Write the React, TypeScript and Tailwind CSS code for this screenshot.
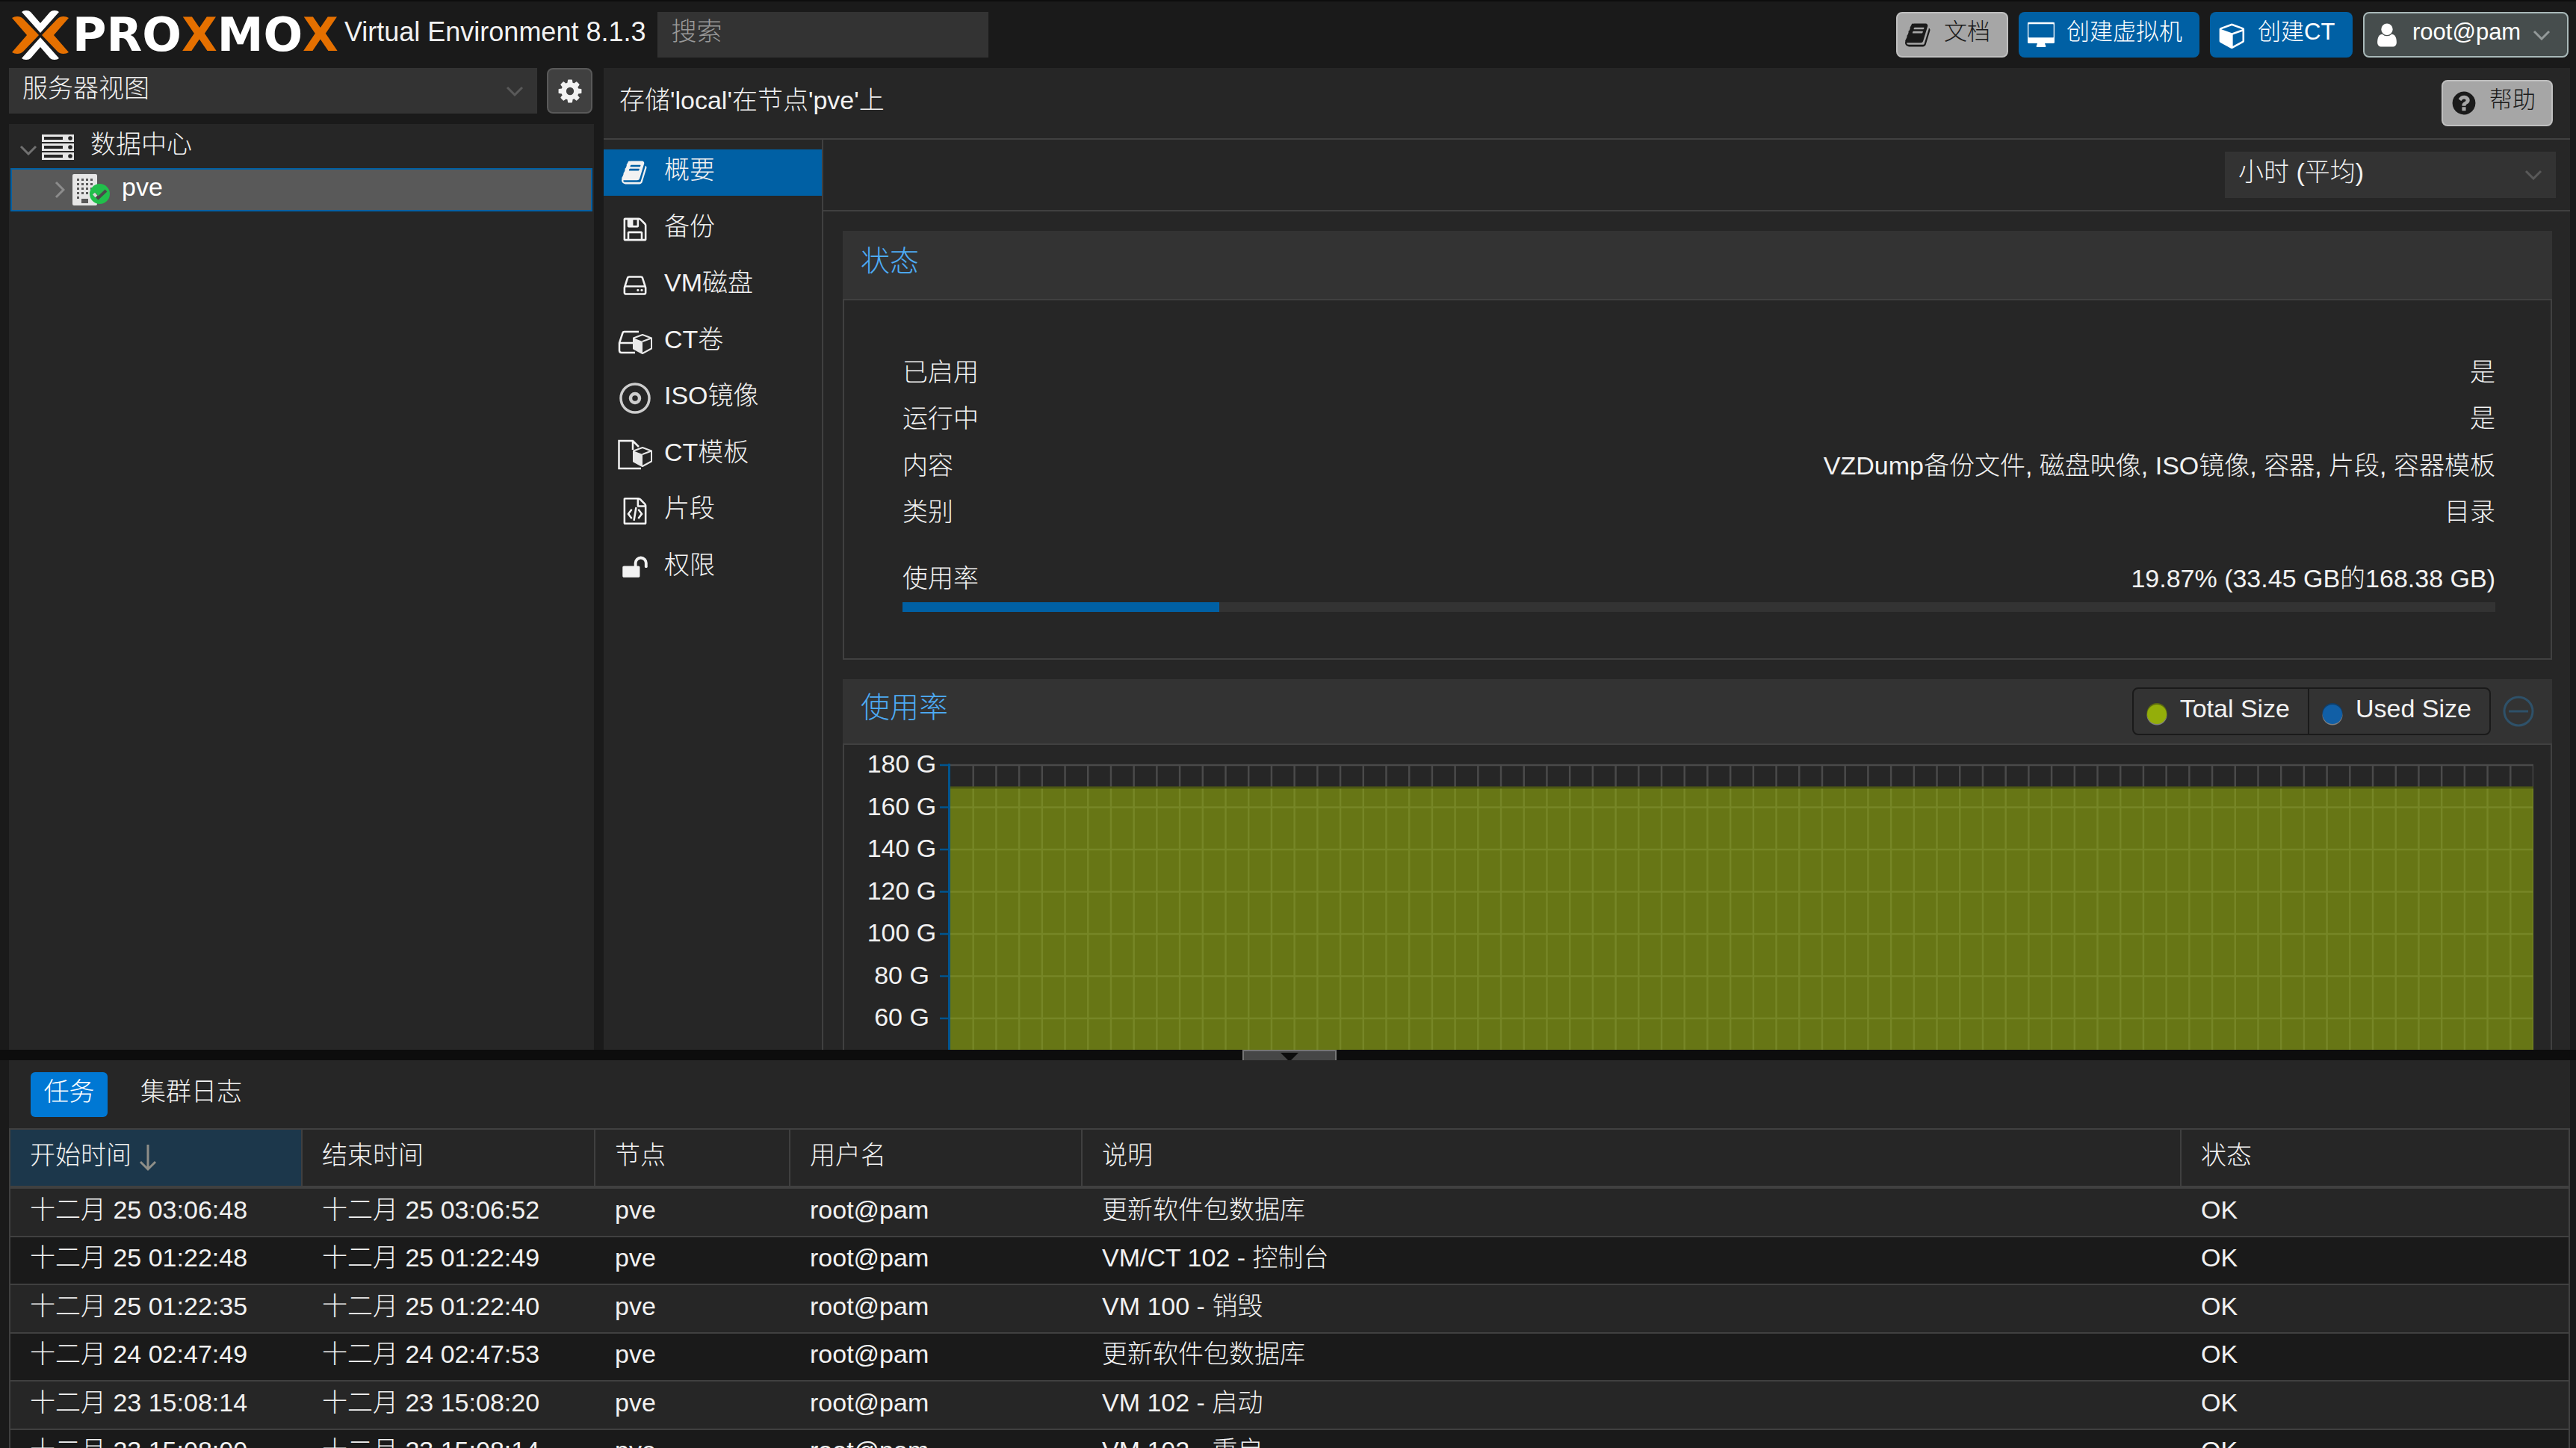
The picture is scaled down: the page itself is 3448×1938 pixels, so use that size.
import React, {useState} from 'react';

const ICONS = {
  book: 'M1639 478q40 57 18 129l-275 906q-19 64-76.5 107.5t-122.5 43.5h-923q-77 0-148.5-53.5t-99.5-131.5q-24-67-2-127 0-4 3-27t4-37q1-8-3-21.5t-3-19.5q2-11 8-21t16.5-23.5 16.5-23.5q23-38 45-91.5t30-91.5q3-10 .5-30t-.5-28q3-11 17-28t17-23q21-36 42-92t25-90q1-9-2.5-32t.5-28q4-13 22-30.5t22-22.5q19-26 42.5-84.5t27.5-96.5q1-8-3-25.5t-2-26.5q2-8 9-18t18-23 17-21q8-12 16.5-30.5t15-35 16-36 19.5-32 26.5-23.5 36-11.5 47.5 5.5l-1 3q38-9 51-9h761q74 0 114 56t18 130l-274 906q-36 119-71.5 153.5t-128.5 34.5h-869q-27 0-38 15-11 16-1 43 24 70 144 70h923q29 0 56-15.5t35-41.5l300-987q7-22 5-57 38 15 59 43zm-1064 2q-4 13 2 22.5t20 9.5h608q13 0 25.5-9.5t16.5-22.5l21-64q4-13-2-22.5t-20-9.5h-608q-13 0-25.5 9.5t-16.5 22.5zm-83 256q-4 13 2 22.5t20 9.5h608q13 0 25.5-9.5t16.5-22.5l21-64q4-13-2-22.5t-20-9.5h-608q-13 0-25.5 9.5t-16.5 22.5z',
  floppy: 'M512 1536h768v-384h-768v384zm896 0h128v-896q0-14-10-38.5t-20-34.5l-281-281q-10-10-34-20t-39-10v416q0 40-28 68t-68 28h-576q-40 0-68-28t-28-68v-416h-128v1280h128v-416q0-40 28-68t68-28h832q40 0 68 28t28 68v416zm-384-928v-320q0-13-9.5-22.5t-22.5-9.5h-192q-13 0-22.5 9.5t-9.5 22.5v320q0 13 9.5 22.5t22.5 9.5h192q13 0 22.5-9.5t9.5-22.5zm640 32v928q0 40-28 68t-68 28h-1344q-40 0-68-28t-28-68v-1344q0-40 28-68t68-28h928q40 0 88 20t76 48l280 280q28 28 48 76t20 88z',
  hdd: 'M1168 1216q0 33-23.5 56.5t-56.5 23.5-56.5-23.5-23.5-56.5 23.5-56.5 56.5-23.5 56.5 23.5 23.5 56.5zm256 0q0 33-23.5 56.5t-56.5 23.5-56.5-23.5-23.5-56.5 23.5-56.5 56.5-23.5 56.5 23.5 23.5 56.5zm112 160v-320q0-13-9.5-22.5t-22.5-9.5h-1216q-13 0-22.5 9.5t-9.5 22.5v320q0 13 9.5 22.5t22.5 9.5h1216q13 0 22.5-9.5t9.5-22.5zm-1230-480h1180l-157-482q-4-13-16-21.5t-26-8.5h-782q-14 0-26 8.5t-16 21.5zm1358 160v320q0 66-47 113t-113 47h-1216q-66 0-113-47t-47-113v-320q0-25 16-75l197-606q17-53 63-86t101-33h782q55 0 101 33t63 86l197 606q16 50 16 75z',
  code: 'M1596 380q28 28 48 76t20 88v1152q0 40-28 68t-68 28h-1344q-40 0-68-28t-28-68v-1600q0-40 28-68t68-28h896q40 0 88 20t76 48zm-444-244v376h376q-10-29-22-41l-313-313q-12-12-41-22zm384 1528v-1024h-416q-40 0-68-28t-28-68v-416h-768v1536h1280zm-928-896q8-11 21-12.5t24 6.5l51 38q11 8 12.5 21t-6.5 24l-182 243 182 243q8 11 6.5 24t-12.5 21l-51 38q-11 8-24 6.5t-21-12.5l-226-301q-14-19 0-38zm802 301q14 19 0 38l-226 301q-8 11-21 12.5t-24-6.5l-51-38q-11-8-12.5-21t6.5-24l182-243-182-243q-8-11-6.5-24t12.5-21l51-38q11-8 24-6.5t21 12.5zm-620 461q-13-2-20.5-13t-5.5-24l138-831q2-13 13-20.5t24-5.5l63 10q13 2 20.5 13t5.5 24l-138 831q-2 13-13 20.5t-24 5.5z',
  unlock: 'M1728 576v256q0 26-19 45t-45 19h-64q-26 0-45-19t-19-45v-256q0-106-75-181t-181-75-181 75-75 181v192h96q40 0 68 28t28 68v576q0 40-28 68t-68 28h-960q-40 0-68-28t-28-68v-576q0-40 28-68t68-28h672v-192q0-185 131.5-316.5t316.5-131.5 316.5 131.5 131.5 316.5z',
  cog: 'M1152 896q0-106-75-181t-181-75-181 75-75 181 75 181 181 75 181-75 75-181zm512-109v222q0 12-8 23t-20 13l-185 28q-19 54-39 91 35 50 107 138 10 12 10 25t-9 23q-27 37-99 108t-94 71q-12 0-26-9l-138-108q-44 23-91 38-16 136-29 186-7 28-36 28h-222q-14 0-24.5-8.5t-11.5-21.5l-28-184q-49-16-90-37l-141 107q-10 9-25 9-14 0-25-11-126-114-165-168-7-10-7-23 0-12 8-23 15-21 51-66.5t54-70.5q-27-50-41-99l-183-27q-13-2-21-12.5t-8-23.5v-222q0-12 8-23t19-13l186-28q14-46 39-92-40-57-107-138-10-12-10-24 0-10 9-23 26-36 98.5-107.5t94.5-71.5q13 0 26 10l138 107q44-23 91-38 16-136 29-186 7-28 36-28h222q14 0 24.5 8.5t11.5 21.5l28 184q49 16 90 37l142-107q9-9 24-9 13 0 25 10 129 119 165 170 7 8 7 22 0 12-8 23-15 21-51 66.5t-54 70.5q26 50 41 98l183 28q13 2 21 12.5t8 23.5z',
  user: 'M1536 1399q0 109-62.5 187t-150.5 78h-854q-88 0-150.5-78t-62.5-187q0-85 8.5-160.5t31.5-152 58.5-131 94-89 134.5-34.5q131 128 313 128t313-128q76 0 134.5 34.5t94 89 58.5 131 31.5 152 8.5 160.5zm-256-887q0 159-112.5 271.5t-271.5 112.5-271.5-112.5-112.5-271.5 112.5-271.5 271.5-112.5 271.5 112.5 112.5 271.5z',
  question: 'M1024 1376v-192q0-14-9-23t-23-9h-192q-14 0-23 9t-9 23v192q0 14 9 23t23 9h192q14 0 23-9t9-23zm256-672q0-88-55.5-163t-138.5-116-170-41q-243 0-371 213-15 24 8 42l132 100q7 6 19 6 16 0 25-12 53-68 86-92 34-24 86-24 48 0 85.5 26t37.5 59q0 38-20 61t-68 45q-63 28-115.5 86.5t-52.5 125.5v36q0 14 9 23t23 9h192q14 0 23-9t9-23q0-19 21.5-49.5t54.5-49.5q32-18 49-28.5t46-35 44.5-48 28-60.5 12.5-81zm384 192q0 209-103 385.5t-279.5 279.5-385.5 103-385.5-103-279.5-279.5-103-385.5 103-385.5 279.5-279.5 385.5-103 385.5 103 279.5 279.5 103 385.5z',
  cube: 'M896 1629l640-349v-636l-640 233v752zm-64-865l698-254-698-254-698 254 698 254zm832-252v768q0 35-18 65t-49 47l-704 384q-28 16-61 16t-61-16l-704-384q-31-17-49-47t-18-65v-768q0-40 23-73t61-47l704-256q22-8 44-8t44 8l704 256q38 14 61 47t23 73z',
  desktop: 'M1728 992v-832q0-13-9.5-22.5t-22.5-9.5h-1600q-13 0-22.5 9.5t-9.5 22.5v832q0 13 9.5 22.5t22.5 9.5h1600q13 0 22.5-9.5t9.5-22.5zm128-832v1088q0 66-47 113t-113 47h-544q0 37 16 77.5t32 71 16 43.5q0 26-19 45t-45 19h-512q-26 0-45-19t-19-45q0-14 16-44t32-70 16-78h-544q-66 0-113-47t-47-113v-1088q0-66 47-113t113-47h1600q66 0 113 47t47 113z',
};

type IconName = keyof typeof ICONS;

const Icon: React.FC<{name: IconName; box?: string}> = ({name, box = '0 0 1792 1792'}) => (
  <svg viewBox={box} className="w-9 h-9 shrink-0 fill-current" aria-hidden="true">
    <path d={ICONS[name]} />
  </svg>
);

const Chevron: React.FC<{className: string}> = ({className}) => (
  <svg viewBox="0 0 24 14" className={className} fill="none" stroke="currentColor" strokeWidth="3" aria-hidden="true">
    <path d="M2 2l10 10L22 2" />
  </svg>
);

const SmallCube = () => (
  <>
    <path d="M33 12l13 5v15l-13 7-13-7V17z" fill="#262626" />
    <path d="M33 13l12 4.500v14L33 38l-12-6.500v-14z" fill="none" stroke="#e8e8e8" strokeWidth="2" strokeLinejoin="round" />
    <path d="M21 17.500l12 4.500v16l-12-6.500z" fill="#e8e8e8" />
    <path d="M33 22l12-4.500" stroke="#e8e8e8" strokeWidth="2" />
  </>
);

const CtVolumeIcon = () => (
  <svg viewBox="0 0 46 46" className="w-[46px] h-[46px]" aria-hidden="true">
    <path d="M28 9H8.500Q7 9 6.500 10.500L2 24v10q0 3 3 3h18M2 24h20" fill="none" stroke="#f2f2f2" strokeWidth="2.500" />
    <SmallCube />
  </svg>
);

const CtTemplateIcon = () => (
  <svg viewBox="0 0 46 46" className="w-[46px] h-[46px]" aria-hidden="true">
    <path d="M31 41H1.500V4H20l8 8M20 4v12" fill="none" stroke="#f2f2f2" strokeWidth="2.500" />
    <SmallCube />
  </svg>
);

const DiscIcon = () => (
  <svg viewBox="0 0 42 42" className="w-[42px] h-[42px]" fill="none" stroke="#cdcdcd" strokeWidth="3.500" aria-hidden="true">
    <circle cx="21" cy="21" r="19" />
    <circle cx="21" cy="21" r="6" strokeWidth="4.500" />
  </svg>
);

const ServerIcon = () => (
  <svg viewBox="0 0 43 34" className="w-[43px] h-[34px]" aria-hidden="true">
    {[0, 12, 24].map((y) => (
      <g key={y}>
        <rect y={y} width="43" height="10" fill="#e6e6e6" />
        <rect x="3" y={y + 3} width="25" height="4" fill="#262626" />
        <circle cx="38" cy={y + 5} r="2.800" fill="#262626" />
      </g>
    ))}
  </svg>
);

const NodeIcon = () => (
  <svg viewBox="0 0 52 42" className="w-[52px] h-[42px]" aria-hidden="true">
    <rect width="33" height="42" rx="2" fill="#e6e6e6" />
    {[6, 12, 18, 24, 30].map((y) =>
      [6, 12, 18, 24].map((x) =>
        y === 30 && x > 6 ? null : <rect key={`${x}-${y}`} x={x} y={y} width="3" height="3" fill="#595959" />,
      ),
    )}
    <rect x="12" y="33" width="9" height="6" fill="#595959" />
    <circle cx="36.500" cy="26.500" r="13.500" fill="#21bf4b" />
    <path d="M29 26l5.500 6L45 22" fill="none" stroke="#4a4a4a" strokeWidth="4" />
    <path d="M28.500 26l3.500 4" fill="none" stroke="#d9d9d9" strokeWidth="4" />
  </svg>
);

const LogoMark = () => (
  <svg viewBox="0 0 76 66" className="w-[76px] h-[66px]" aria-hidden="true">
    <path d="M13 2q2-2 6-2 4 0 6 2l13 15L51 2q2-2 6-2 4 0 6 2L38 30z" fill="#fff" />
    <path d="M13 64q2 2 6 2 4 0 6-2l13-15 13 15q2 2 6 2 4 0 6-2L38 36z" fill="#fff" />
    <path d="M0 10q3-2 7-2 5 0 8 3l21 22-21 22q-3 3-8 3-4 0-7-2l20-23z" fill="#e57000" />
    <path d="M76 10q-3-2-7-2-5 0-8 3L40 33l21 22q3 3 8 3 4 0 7-2L56 33z" fill="#e57000" />
  </svg>
);

const NAV: Array<{id: string; label: string; icon: React.ReactNode}> = [
  {id: 'summary', label: '概要', icon: <Icon name="book" />},
  {id: 'backup', label: '备份', icon: <Icon name="floppy" />},
  {id: 'images', label: 'VM磁盘', icon: <Icon name="hdd" />},
  {id: 'rootdir', label: 'CT卷', icon: <CtVolumeIcon />},
  {id: 'iso', label: 'ISO镜像', icon: <DiscIcon />},
  {id: 'vztmpl', label: 'CT模板', icon: <CtTemplateIcon />},
  {id: 'snippets', label: '片段', icon: <Icon name="code" />},
  {id: 'permissions', label: '权限', icon: <Icon name="unlock" />},
];

const STATUS = [
  ['已启用', '是'],
  ['运行中', '是'],
  ['内容', 'VZDump备份文件, 磁盘映像, ISO镜像, 容器, 片段, 容器模板'],
  ['类别', '目录'],
];

const TASKS = [
  {start: '十二月 25 03:06:48', end: '十二月 25 03:06:52', desc: '更新软件包数据库'},
  {start: '十二月 25 01:22:48', end: '十二月 25 01:22:49', desc: 'VM/CT 102 - 控制台'},
  {start: '十二月 25 01:22:35', end: '十二月 25 01:22:40', desc: 'VM 100 - 销毁'},
  {start: '十二月 24 02:47:49', end: '十二月 24 02:47:53', desc: '更新软件包数据库'},
  {start: '十二月 23 15:08:14', end: '十二月 23 15:08:20', desc: 'VM 102 - 启动'},
  {start: '十二月 23 15:08:00', end: '十二月 23 15:08:14', desc: 'VM 102 - 重启'},
];

const Header = () => (
  <header className="flex items-center h-[91px] shrink-0 border-t-2 border-[#0d0d0d] pl-4 pr-[10px]">
    <LogoMark />
    <div className="flex items-center h-[62px] ml-[5px] font-['DejaVu_Sans'] font-bold text-[62px] leading-[62px] text-white" aria-label="Proxmox">
      PRO<span className="text-[#e57000]">X</span>MO<span className="text-[#e57000]">X</span>
    </div>
    <span className="ml-2 pb-2 text-[36px] leading-10 whitespace-nowrap">Virtual Environment 8.1.3</span>
    <input
      type="text"
      aria-label="搜索"
      placeholder="搜索"
      className="ml-4 w-[443px] h-[61px] bg-[#333] pl-[18px] pb-2 font-light outline-none placeholder:text-[#999]"
    />
    <div className="flex gap-[14px] ml-auto text-[31px] leading-9">
      <button className="flex items-center gap-4 w-[150px] h-[61px] pl-[10px] rounded-lg border-2 border-[#bfbfbf] bg-[#a6a6a6] text-[#1a1a1a]">
        <Icon name="book" />
        <span className="pb-2">文档</span>
      </button>
      <button className="flex items-center gap-4 w-[242px] h-[61px] pl-[12px] rounded-lg bg-[#0060a4] text-white">
        <Icon name="desktop" box="0 0 1792 1728" />
        <span className="pb-2">创建虚拟机</span>
      </button>
      <button className="flex items-center gap-4 w-[191px] h-[61px] pl-[12px] rounded-lg bg-[#0060a4] text-white">
        <Icon name="cube" box="0 0 1728 1792" />
        <span className="pb-2">创建CT</span>
      </button>
      <button className="flex items-center gap-4 w-[275px] h-[61px] pl-[12px] rounded-lg border-2 border-[#a9b9b9] bg-[#464d4d] text-white">
        <Icon name="user" />
        <span className="pb-2">root@pam</span>
        <Chevron className="w-6 h-[14px] text-[#939999]" />
      </button>
    </div>
  </header>
);

const ResourceTree = () => (
  <aside className="flex flex-col w-[783px] shrink-0">
    <div className="flex gap-[13px] mb-[14px]">
      <div className="relative w-[707px]">
        <select aria-label="视图" className="w-full h-[61px] appearance-none bg-[#333] pl-[18px] pb-2 font-light outline-none">
          <option>服务器视图</option>
        </select>
        <Chevron className="absolute right-[18px] top-6 w-6 h-[14px] text-[#595959]" />
      </div>
      <button aria-label="设置" className="flex items-center justify-center w-[61px] h-[61px] rounded-lg border-2 border-[#595959] bg-[#404040]">
        <Icon name="cog" />
      </button>
    </div>
    <div className="flex-1 bg-[#262626] pt-[2px] px-[2px]">
      <div className="flex items-center h-[57px] pl-[12px]">
        <Chevron className="w-6 h-[14px] mt-2 mr-[6px] text-[#707070]" />
        <ServerIcon />
        <span className="ml-[22px] pb-2 leading-10">数据中心</span>
      </div>
      <div className="flex items-center h-[58px] pl-[52px] border-2 border-[#0060a4] bg-[#595959] text-white">
        <Chevron className="w-6 h-[14px] -rotate-90 mr-[5px] text-[#8c8c8c]" />
        <NodeIcon />
        <span className="ml-[14px] pb-2 leading-10">pve</span>
      </div>
    </div>
  </aside>
);

const GRID_COLS = 69;
const AXIS_TOP = 27;
const AXIS_STEP = 56.5;
const AXIS_LABELS = ['180 G', '160 G', '140 G', '120 G', '100 G', '80 G', '60 G'];
const AREA_TOP = 57;
const CHART_BOTTOM = 440;

const UsageChart = () => {
  const rows = AXIS_LABELS.map((_, i) => AXIS_TOP + i * AXIS_STEP);
  const cols = Array.from({length: GRID_COLS}, (_, i) => `${((i + 1) / GRID_COLS) * 100}%`);

  return (
    <div className="flex pr-[23px]">
      <svg className="w-[142px] h-[440px] shrink-0" aria-hidden="true">
        {AXIS_LABELS.map((label, i) => (
          <g key={label}>
            <text x="77" y={rows[i] + 10} textAnchor="middle" className="text-[34px] fill-[#f2f2f2]">
              {label}
            </text>
            <path d={`M128 ${rows[i]}h13`} stroke="#00558f" strokeWidth="2.500" />
          </g>
        ))}
        <path d={`M140.500 ${AXIS_TOP - 2}V${CHART_BOTTOM}`} stroke="#00558f" strokeWidth="3" />
      </svg>
      <svg className="flex-1 h-[440px] min-w-0" role="img" aria-label="使用率">
        {cols.map((x) => (
          <line key={x} x1={x} x2={x} y1={AXIS_TOP} y2={AREA_TOP} stroke="#4a4a4a" strokeWidth="2.500" />
        ))}
        <line x1="0" x2="100%" y1={AXIS_TOP} y2={AXIS_TOP} stroke="#4a4a4a" strokeWidth="2.500" />
        <rect y={AREA_TOP} width="100%" height={CHART_BOTTOM - AREA_TOP} fill="#677615" />
        {cols.map((x) => (
          <line key={x} x1={x} x2={x} y1={AREA_TOP} y2={CHART_BOTTOM} stroke="#768626" strokeWidth="2.500" />
        ))}
        {rows.slice(1).map((y) => (
          <line key={y} x1="0" x2="100%" y1={y} y2={y} stroke="#768626" strokeWidth="2.500" />
        ))}
        <line x1="0" x2="100%" y1={AREA_TOP} y2={AREA_TOP} stroke="#4d5814" strokeWidth="3" />
      </svg>
    </div>
  );
};

const LegendItem: React.FC<{label: string; fill: string; rim: string}> = ({label, fill, rim}) => (
  <button className="flex items-center gap-4 pl-4 pr-6 h-[60px]">
    <svg viewBox="0 0 30 32" className="w-[30px] h-8 mt-2" aria-hidden="true">
      <circle cx="15" cy="17" r="13.500" fill="#808080" />
      <circle cx="15" cy="14.500" r="13.500" fill={rim} />
      <circle cx="15" cy="16" r="13" fill={fill} />
    </svg>
    <span className="pb-2 leading-10">{label}</span>
  </button>
);

const StoragePanel = () => {
  const [active, setActive] = useState('summary');

  return (
    <main className="flex flex-col flex-1 min-w-0 bg-[#262626]">
      <div className="flex items-center justify-between h-24 shrink-0 pl-[21px] pr-[23px] border-b-2 border-[#404040]">
        <h1 className="pb-2 leading-10">存储'local'在节点'pve'上</h1>
        <button className="flex items-center gap-4 w-[149px] h-[62px] pl-[10px] rounded-lg border-2 border-[#bfbfbf] bg-[#a6a6a6] text-[31px] leading-9 text-[#1a1a1a]">
          <Icon name="question" />
          <span className="pb-2">帮助</span>
        </button>
      </div>
      <div className="flex flex-1 min-h-0">
        <nav className="flex flex-col gap-[14px] w-[294px] shrink-0 pt-[13px] border-r-2 border-[#404040]">
          {NAV.map((item) => (
            <button
              key={item.id}
              onClick={() => setActive(item.id)}
              className={`flex items-center gap-4 h-[62px] even:h-[61px] pl-[19px] text-left ${
                active === item.id ? 'bg-[#0060a4]' : ''
              }`}
            >
              <span className="flex justify-center w-[46px]">{item.icon}</span>
              <span className="pb-2 leading-10">{item.label}</span>
            </button>
          ))}
        </nav>
        <div className="flex flex-col flex-1 min-w-0">
          <div className="flex justify-end items-center h-24 shrink-0 pr-[19px] border-b-2 border-[#404040]">
            <div className="relative w-[443px]">
              <select aria-label="时间范围" className="w-full h-[62px] appearance-none bg-[#333] pl-[18px] pb-2 font-light outline-none">
                <option>小时 (平均)</option>
              </select>
              <Chevron className="absolute right-[18px] top-6 w-6 h-[14px] text-[#595959]" />
            </div>
          </div>
          <div className="flex flex-col gap-[26px] flex-1 min-h-0 overflow-hidden pt-[26px] pl-[26px] pr-6">
            <section className="shrink-0">
              <h2 className="flex items-center h-[91px] pl-6 pb-[10px] bg-[#333] text-[39px] leading-[44px] text-[#4dabf5]">状态</h2>
              <div className="border-2 border-[#404040] pt-[68px] pb-[62px] pl-[78px] pr-[74px]">
                {STATUS.map(([label, value]) => (
                  <div key={label} className="flex items-center justify-between h-[63px] even:h-[62px] pb-2">
                    <span>{label}</span>
                    <span>{value}</span>
                  </div>
                ))}
                <div className="flex items-center justify-between h-14 mt-[30px] pb-2">
                  <span>使用率</span>
                  <span>19.87% (33.45 GB的168.38 GB)</span>
                </div>
                <div className="h-[13px] bg-[#333]">
                  <div className="h-full bg-[#0060a4]" style={{width: '19.87%'}} />
                </div>
              </div>
            </section>
            <section className="shrink-0">
              <div className="flex items-center justify-between h-[86px] pl-6 pr-6 bg-[#333]">
                <h2 className="pb-[10px] text-[39px] leading-[44px] text-[#4dabf5]">使用率</h2>
                <div className="flex items-center gap-4">
                  <div className="flex rounded-lg border-2 border-[#1a1a1a] divide-x-2 divide-[#1a1a1a]">
                    <LegendItem label="Total Size" fill="#94ae0a" rim="#5c6b10" />
                    <LegendItem label="Used Size" fill="#115fa6" rim="#0f3f6b" />
                  </div>
                  <button aria-label="缩小">
                    <svg viewBox="0 0 42 42" className="block w-[42px] h-[42px]" fill="none" stroke="#2e5169" strokeWidth="3" aria-hidden="true">
                      <circle cx="21" cy="21" r="19" />
                      <path d="M8 21h26" />
                    </svg>
                  </button>
                </div>
              </div>
              <div className="border-2 border-[#404040]">
                <UsageChart />
              </div>
            </section>
          </div>
        </div>
      </div>
    </main>
  );
};

const TH = 'h-[79px] pl-[26px] pb-2 border-r-2 border-b-4 border-[#404040] text-left font-light last:border-r-0';
const TD = 'h-[65px] group-even:h-16 pl-[26px] pb-2 border-b-2 border-[#404040]';

const TaskLog = () => (
  <section className="h-[519px] shrink-0 overflow-hidden ml-3 mr-2 bg-[#262626]">
    <div className="flex items-center gap-[18px] h-[93px] pl-[29px] border-b-2 border-[#404040]">
      <button className="w-[103px] h-[60px] pb-2 rounded-md bg-[#0078d4] text-white">任务</button>
      <button className="h-[60px] px-[26px] pb-2">集群日志</button>
    </div>
    <div className="border-x-2 border-[#404040]">
      <table className="w-full table-fixed border-separate border-spacing-0 leading-10">
        <colgroup>
          <col className="w-[391px]" />
          <col className="w-[392px]" />
          <col className="w-[261px]" />
          <col className="w-[391px]" />
          <col />
          <col className="w-[518px]" />
        </colgroup>
        <thead>
          <tr>
            <th className={`${TH} bg-[#1c374b]`}>
              <span className="flex items-center">
                开始时间
                <svg viewBox="0 0 24 36" className="w-6 h-9 ml-[10px] mt-2" fill="none" stroke="#8e8e88" strokeWidth="3" aria-hidden="true">
                  <path d="M12 0v33M2 23l10 10 10-10" />
                </svg>
              </span>
            </th>
            <th className={TH}>结束时间</th>
            <th className={TH}>节点</th>
            <th className={TH}>用户名</th>
            <th className={TH}>说明</th>
            <th className={TH}>状态</th>
          </tr>
        </thead>
        <tbody>
          {TASKS.map((task) => (
            <tr key={task.start} className="group even:bg-[#1a1a1a]">
              <td className={TD}>{task.start}</td>
              <td className={TD}>{task.end}</td>
              <td className={TD}>pve</td>
              <td className={TD}>root@pam</td>
              <td className={TD}>{task.desc}</td>
              <td className={TD}>OK</td>
            </tr>
          ))}
        </tbody>
      </table>
    </div>
  </section>
);

export default function App() {
  return (
    <div className="flex flex-col h-screen overflow-hidden bg-[#1a1a1a] font-['Liberation_Sans','Noto_Sans_CJK_SC',sans-serif] font-light text-[34px] leading-10 text-[#f2f2f2]">
      <Header />
      <div className="flex flex-1 min-h-0 gap-[13px] pl-3 pr-2">
        <ResourceTree />
        <StoragePanel />
      </div>
      <div className="flex justify-center h-[14px] shrink-0 pl-1 bg-[#0d0d0d]">
        <button aria-label="折叠" className="flex justify-center w-[126px] h-[14px] border-2 border-b-0 border-[#757575] bg-[#464646]">
          <svg viewBox="0 0 24 10" className="w-6 h-[10px] mt-[2px]" aria-hidden="true">
            <path d="M0 0h24L12 12z" fill="#0d0d0d" />
          </svg>
        </button>
      </div>
      <TaskLog />
    </div>
  );
}
